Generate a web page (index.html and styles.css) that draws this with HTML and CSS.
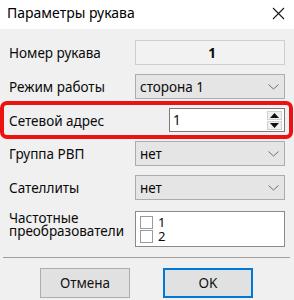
FILE: index.html
```html
<!DOCTYPE html>
<html lang="ru">
<head>
<meta charset="utf-8">
<link rel="stylesheet" href="styles.css">
</head>
<body>
<div class="dialog">
  <div class="titlebar">
    <span class="title">Параметры рукава</span>
    <svg class="close" width="13" height="13" viewBox="0 0 13 13"><path d="M1 1 L12 12 M12 1 L1 12" stroke="#1a1a1a" stroke-width="1.1" fill="none"/></svg>
  </div>
  <div class="content">
    <div class="row">
      <span class="label">Номер рукава</span>
      <div class="field readonly">1</div>
    </div>
    <div class="row">
      <span class="label">Режим работы</span>
      <div class="field combo"><span>сторона 1</span><svg class="chev" width="11" height="6" viewBox="0 0 11 6"><path d="M0.5 0.5 L5.5 5 L10.5 0.5" stroke="#707070" stroke-width="1" fill="none"/></svg></div>
    </div>
    <div class="row spin-row highlight">
      <span class="label">Сетевой адрес</span>
      <div class="field spin"><span>1</span>
        <div class="spin-btns">
          <div class="spin-btn"><svg width="9" height="5" viewBox="0 0 9 5"><path d="M0 5 L4.5 0 L9 5 Z" fill="#111"/></svg></div>
          <div class="spin-btn"><svg width="9" height="5" viewBox="0 0 9 5"><path d="M0 0 L9 0 L4.5 5 Z" fill="#111"/></svg></div>
        </div>
      </div>
    </div>
    <div class="row">
      <span class="label">Группа РВП</span>
      <div class="field combo"><span>нет</span><svg class="chev" width="11" height="6" viewBox="0 0 11 6"><path d="M0.5 0.5 L5.5 5 L10.5 0.5" stroke="#707070" stroke-width="1" fill="none"/></svg></div>
    </div>
    <div class="row">
      <span class="label">Сателлиты</span>
      <div class="field combo"><span>нет</span><svg class="chev" width="11" height="6" viewBox="0 0 11 6"><path d="M0.5 0.5 L5.5 5 L10.5 0.5" stroke="#707070" stroke-width="1" fill="none"/></svg></div>
    </div>
    <div class="row list-row">
      <span class="label multi"><span class="ln">Частотные</span><span class="ln">преобразователи</span></span>
      <div class="field list">
        <div class="item"><span class="cb"></span><span class="it">1</span></div>
        <div class="item"><span class="cb"></span><span class="it">2</span></div>
      </div>
    </div>
  </div>
  <div class="sep"></div>
  <div class="buttons">
    <div class="btn">Отмена</div>
    <div class="btn ok">OK</div>
  </div>
</div>
</body>
</html>
```
FILE: styles.css
```css
html, body {
  margin: 0;
  padding: 0;
}
body {
  font-family: "Noto Sans", "Open Sans", sans-serif;
  font-size: 13.5px;
  color: #0a0a0a;
  background: #f0f0f0;
}
.dialog {
  width: 294px;
  height: 300px;
  background: #f0f0f0;
  overflow: hidden;
}
.titlebar {
  height: 29px;
  background: #fff;
  display: flex;
  align-items: center;
  justify-content: space-between;
  padding: 0 9px 0 7px;
}
.title {
  font-size: 14px;
  color: #000;
  line-height: 16px;
  margin-top: -3px;
}
.close {
  display: block;
  margin-top: -2px;
}
.content {
  display: flex;
  flex-direction: column;
  gap: 9px;
  padding: 11px 9px 0 9px;
}
.row {
  display: grid;
  grid-template-columns: 126px 150px;
  align-items: center;
  height: 25px;
  position: relative;
}
.label {
  line-height: 15px;
  padding-top: 2px;
  white-space: nowrap;
}
.field {
  box-sizing: border-box;
  height: 25px;
  border: 1px solid #adadad;
  display: flex;
  align-items: center;
}
.readonly {
  background: #f2f2f2;
  border-color: #cfcfcf;
  justify-content: center;
  font-weight: bold;
  padding-left: 4px;
}
.combo {
  background: #e5e5e5;
  border-color: #acacac;
  justify-content: space-between;
  padding: 0 5px 0 4px;
}
.chev { display: block; }
.spin-row { height: 24px; }
.spin {
  height: 24px;
  background: #fff;
  border-color: #7a7a7a;
  justify-content: space-between;
  padding: 0 2px 0 3px;
  margin-left: 34px;
  width: 116px;
}
.spin-btns {
  display: flex;
  flex-direction: column;
  gap: 1px;
}
.spin-btn {
  width: 15px;
  height: 9px;
  display: flex;
  align-items: center;
  justify-content: center;
  background: #f0f0f0;
  border: 1px solid #d0d0d0;
  box-sizing: border-box;
}
.highlight::before {
  content: "";
  position: absolute;
  left: -9px;
  right: -8px;
  top: -7px;
  bottom: -7px;
  border: 4px solid #ee1111;
  border-radius: 7px;
  pointer-events: none;
}
.list-row {
  height: 36px;
  align-items: start;
  margin-top: 2px;
}
.multi {
  display: flex;
  flex-direction: column;
  padding-top: 1px;
}
.ln {
  display: block;
  height: 13px;
  line-height: 13px;
}
.list {
  height: 36px;
  background: #fff;
  border-color: #8a8a8a;
  flex-direction: column;
  align-items: flex-start;
  justify-content: flex-start;
  padding: 3px 0 0 4px;
}
.item {
  display: flex;
  align-items: center;
  height: 14px;
  gap: 5px;
}
.it {
  line-height: 14px;
  font-size: 13px;
}
.cb {
  box-sizing: border-box;
  width: 13px;
  height: 13px;
  border: 1px solid #9a9a9a;
  background: #fff;
}
.sep {
  height: 1px;
  background: #a0a0a0;
  margin: 10px 4px 0 3px;
}
.buttons {
  display: flex;
  gap: 33px;
  padding: 10px 0 0 40px;
}
.btn {
  box-sizing: border-box;
  width: 90px;
  height: 30px;
  background: #e1e1e1;
  border: 1px solid #adadad;
  display: flex;
  align-items: center;
  justify-content: center;
  color: #111;
}
.btn.ok {
  border: 2px solid #0078d7;
}
```
